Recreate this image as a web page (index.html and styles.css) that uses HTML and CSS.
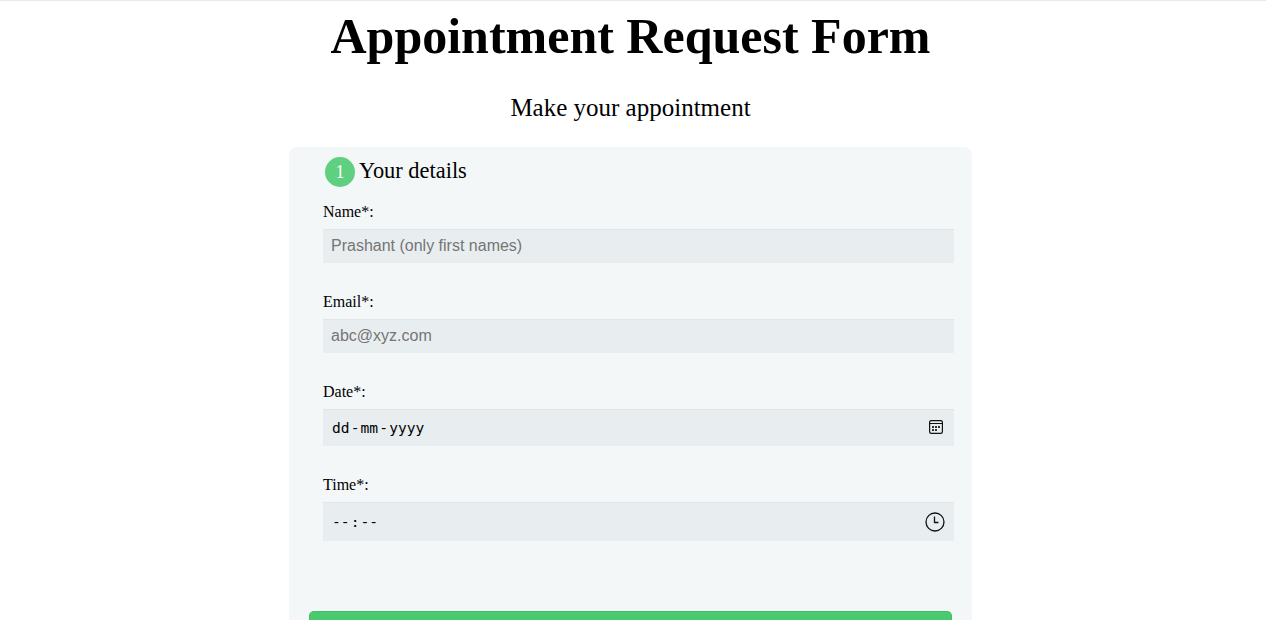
FILE: index.html
```html
<!DOCTYPE html>
<html lang="en">
<head>
<meta charset="utf-8">
<title>Appointment Request Form</title>
<link rel="stylesheet" href="styles.css">
</head>
<body>
<h1 class="title">Appointment Request Form</h1>
<p class="subtitle">Make your appointment</p>
<form class="card">
  <div class="legend"><span class="number">1</span><span class="legend-text">Your details</span></div>
  <label class="label" for="name">Name*:</label>
  <input class="field" id="name" type="text" placeholder="Prashant (only first names)">
  <label class="label" for="email">Email*:</label>
  <input class="field" id="email" type="email" placeholder="abc@xyz.com">
  <span class="label">Date*:</span>
  <div class="field picker date"><span class="value">dd<i>-</i>mm<i>-</i>yyyy</span>
    <svg class="calendar" width="14" height="14" viewBox="0 0 14 14" fill="none" stroke="#111"><rect x=".6" y=".6" width="12.8" height="12.8" rx="1.6" stroke-width="1.2"/><path d="M1 3.5h12"/><path d="M3 7h2M6 7h2M9 7h2M3 10h2M6 10h2" stroke="#333" stroke-width="2"/></svg>
  </div>
  <span class="label">Time*:</span>
  <div class="field picker time"><span class="value">--<i>:</i>--</span>
    <svg class="clock" width="20" height="20" viewBox="0 0 20 20" fill="none" stroke="#111" stroke-width="1.3"><circle cx="10" cy="10" r="9"/><path d="M9.5 4.5V10.5h4"/></svg>
  </div>
  <div class="submit"></div>
</form>
</body>
</html>
```
FILE: styles.css
```css
* { box-sizing: border-box; }
body { margin: 0; height: 620px; overflow: hidden; border-top: 1px solid #e9e9e9; background: #fff; color: #000; font-family: "Liberation Serif", "Times New Roman", serif; }
.title { margin: 6px 5px 0 0; font-size: 50px; line-height: 58px; text-align: center; }
.subtitle { margin: 28px 5px 0 0; font-size: 25px; line-height: 29px; text-align: center; }
.card { display: flex; flex-direction: column; width: 683px; height: 473px; margin: 25px 0 0 289px; padding: 9px 18px 0 34px; background: #f4f7f8; border-radius: 8px 8px 0 0; }
.legend { display: flex; align-items: center; gap: 4px; height: 32px; padding-left: 2px; font-size: 22.4px; }
.legend-text { padding-bottom: 2px; }
.number { width: 30px; height: 30px; border-radius: 50%; background: #5fcf80; color: #fff; font-size: 18px; line-height: 30px; text-align: center; }
.label { height: 18px; margin: 15px 0 8px; font-size: 16px; line-height: 18px; }
.field { width: 631px; height: 34px; flex: none; margin: 0 0 15px; padding: 8px; border: 0; border-radius: 0; background: #e8eeef; box-shadow: 0 1px 0 rgba(0,0,0,.03) inset; font: 16px/16px "Liberation Sans", Arial, sans-serif; }
.field::placeholder { color: #757575; opacity: 1; }
.picker { display: flex; align-items: center; justify-content: space-between; }
.date { height: 37px; padding-right: 11px; }
.time { height: 39px; padding-right: 9px; }
.value { padding-left: 1px; font: 14.6px/16px "DejaVu Sans Mono", monospace; }
.value i { display: inline-block; width: 11px; font-style: normal; text-align: center; }
.date .value { padding-top: 1px; }
.date .calendar { margin-bottom: 1px; }
.submit { width: 643px; height: 9px; margin: 55px 0 0 -14px; flex: none; border: 1px solid #3ac162; border-bottom: 0; border-radius: 5px 5px 0 0; background: #4bc970; }
```
